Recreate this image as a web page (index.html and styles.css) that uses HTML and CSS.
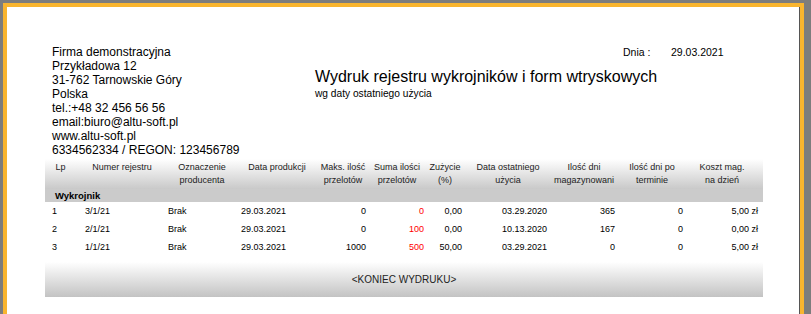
FILE: index.html
```html
<!DOCTYPE html>
<html lang="pl">
<head>
<meta charset="utf-8">
<link rel="stylesheet" href="styles.css">
</head>
<body>
<div class="page">
  <div class="top">
    <div class="company">
      <div>Firma demonstracyjna</div>
      <div>Przykładowa 12</div>
      <div>31-762 Tarnowskie Góry</div>
      <div>Polska</div>
      <div>tel.:+48 32 456 56 56</div>
      <div>email:biuro@altu-soft.pl</div>
      <div>www.altu-soft.pl</div>
      <div>6334562334 / REGON: 123456789</div>
    </div>
    <div class="head">
      <div class="date-row"><span class="date-label">Dnia :</span><span class="date-val">29.03.2021</span></div>
      <div class="title">Wydruk rejestru wykrojników i form wtryskowych</div>
      <div class="subtitle">wg daty ostatniego użycia</div>
    </div>
  </div>
  <div class="report">
    <div class="grid hdr">
      <div class="c">Lp</div>
      <div class="c">Numer rejestru</div>
      <div class="c">Oznaczenie<br>producenta</div>
      <div class="c">Data produkcji</div>
      <div class="c">Maks. ilość<br>przelotów</div>
      <div class="c">Suma ilości<br>przelotów</div>
      <div class="c">Zużycie<br>(%)</div>
      <div class="c">Data ostatniego<br>użycia</div>
      <div class="c">Ilość dni<br>magazynowani</div>
      <div class="c">Ilość dni po<br>terminie</div>
      <div class="c c-last">Koszt mag.<br>na dzień</div>
    </div>
    <div class="group">Wykrojnik</div>
    <div class="grid row">
      <div class="l lp">1</div><div class="l nr">3/1/21</div><div class="l oz">Brak</div><div class="l dp">29.03.2021</div>
      <div class="r">0</div><div class="r red">0</div><div class="r">0,00</div><div class="r dt">03.29.2020</div>
      <div class="r mg">365</div><div class="r pt">0</div><div class="r pt">5,00 zł</div>
    </div>
    <div class="grid row">
      <div class="l lp">2</div><div class="l nr">2/1/21</div><div class="l oz">Brak</div><div class="l dp">29.03.2021</div>
      <div class="r">0</div><div class="r red">100</div><div class="r">0,00</div><div class="r dt">10.13.2020</div>
      <div class="r mg">167</div><div class="r pt">0</div><div class="r pt">0,00 zł</div>
    </div>
    <div class="grid row">
      <div class="l lp">3</div><div class="l nr">1/1/21</div><div class="l oz">Brak</div><div class="l dp">29.03.2021</div>
      <div class="r">1000</div><div class="r red">500</div><div class="r">50,00</div><div class="r dt">03.29.2021</div>
      <div class="r mg">0</div><div class="r pt">0</div><div class="r pt">5,00 zł</div>
    </div>
    <div class="end">&lt;KONIEC WYDRUKU&gt;</div>
  </div>
</div>
</body>
</html>
```
FILE: styles.css
```css
html, body {
  margin: 0;
  padding: 0;
}
body {
  background: #7d7d7d;
  width: 811px;
  height: 314px;
  overflow: hidden;
  font-family: "Liberation Sans", Arial, sans-serif;
  color: #000;
}
.page {
  margin: 3px 0 0 3px;
  width: 801px;
  height: 320px;
  background: #fff;
  border-left: 4px solid #f9b52f;
  border-top: 4px solid #f9b52f;
  border-right: 4px solid #f9b52f;
  box-shadow: inset -1px 0 0 #555;
  box-sizing: border-box;
  padding: 38px 0 0 38px;
}
.top {
  display: flex;
  height: 114px;
}
.company {
  margin-left: 7px;
  width: 263px;
  font-size: 12px;
  line-height: 14px;
}
.head {
  display: flex;
  flex-direction: column;
}
.date-row {
  display: flex;
  font-size: 10.5px;
  line-height: 14px;
  margin-left: 308px;
}
.date-label {
  width: 48px;
}
.title {
  margin-top: 8px;
  font-size: 16px;
  line-height: 20px;
}
.subtitle {
  font-size: 10.2px;
  line-height: 14px;
}
.report {
  width: 718px;
  font-size: 9px;
}
.grid {
  display: grid;
  grid-template-columns: 31px 92px 68px 82px 50px 58px 38px 88px 64px 72px 75px;
}
.hdr {
  height: 30px;
  padding-top: 2px;
  box-sizing: border-box;
  line-height: 13px;
  color: #222;
  background: linear-gradient(#ffffff, #c9c9c9);
}
.c {
  text-align: center;
  white-space: nowrap;
}
.c-last {
  padding-right: 7px;
}
.group {
  height: 13px;
  line-height: 13px;
  background: #cbcbcb;
  font-weight: bold;
  font-size: 9.5px;
  padding-left: 10px;
}
.row {
  height: 18px;
  line-height: 18px;
}
.l { text-align: left; }
.r { text-align: right; padding-right: 2px; }
.lp { padding-left: 7px; }
.nr { padding-left: 9px; }
.oz { padding-left: 0; }
.dp { padding-left: 5px; }
.dt { padding-right: 5px; }
.mg { padding-right: 1px; }
.pt { padding-right: 5px; }
.red { color: #ff0000; }
.end {
  margin-top: 6px;
  height: 35px;
  line-height: 36px;
  text-align: center;
  font-size: 10px;
  color: #222;
  background: linear-gradient(#ffffff, #c3c3c3);
}
```
